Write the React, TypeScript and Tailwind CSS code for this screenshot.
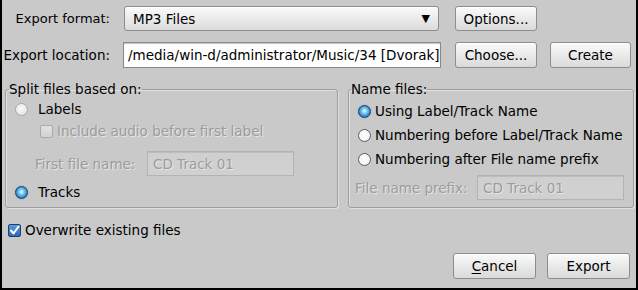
import React from "react";

const btn =
  "flex items-center justify-center rounded-[3px] border border-[#8d8d8d] bg-[linear-gradient(#fbfbfb,#e6e6e6_60%,#dadada)] shadow-[inset_0_1px_0_#ffffff] text-black";

const dim = "text-[#9c9c9c] [text-shadow:1px_1px_0_#e6e6e6]";

function Radio({ checked, light }: { checked?: boolean; light?: boolean }) {
  if (checked) {
    return (
      <span className="block w-[13px] h-[13px] flex-shrink-0 rounded-full border border-[#1d3e6e] bg-[radial-gradient(circle_at_50%_45%,#e6fbff_0%,#7fd0f6_30%,#2f7cc4_70%,#1c4c8c_100%)] shadow-[0_0_2px_#7fa6c8]" />
    );
  }
  return (
    <span
      className={
        light
          ? "block w-[13px] h-[13px] flex-shrink-0 rounded-full border border-[#a8a8a8] bg-[radial-gradient(circle_at_45%_40%,#fafafa,#dedede)]"
          : "block w-[13px] h-[13px] flex-shrink-0 rounded-full border border-[#5e5e5e] bg-[radial-gradient(circle_at_45%_40%,#ffffff,#ececec)]"
      }
    />
  );
}

function Check({ checked }: { checked?: boolean }) {
  if (checked) {
    return (
      <span className="flex items-center justify-center w-[13px] h-[13px] flex-shrink-0 rounded-[2px] border border-[#1d3e6e] bg-[linear-gradient(#5a9be0,#2a69b8)]">
        <svg width="11" height="11" viewBox="0 0 11 11">
          <path d="M2 5.5 L4.5 8.5 L9.5 1.5" fill="none" stroke="#ffffff" strokeWidth="2" strokeLinecap="round" strokeLinejoin="round" />
        </svg>
      </span>
    );
  }
  return (
    <span className="block w-[13px] h-[13px] flex-shrink-0 rounded-[2px] border border-[#a9a9a9] bg-[linear-gradient(#e2e2e2,#d2d2d2)]" />
  );
}

function DisabledInput({ w, value }: { w: string; value: string }) {
  return (
    <div
      className={`${w} h-[25px] flex items-center pl-[5px] border border-[#b3b3b3] bg-[#d0d0d0] shadow-[inset_0_1px_0_#bdbdbd] ${dim}`}
    >
      {value}
    </div>
  );
}

export default function App() {
  return (
    <div className="w-[638px] h-[290px] bg-[#c9c9c9] border-x-2 border-b-2 border-black flex flex-col text-[13.5px] leading-[16px] text-black font-['DejaVu_Sans',sans-serif] overflow-hidden">
      {/* Export format */}
      <div className="mt-[6px] flex items-center">
        <div className="w-[108px] text-right whitespace-nowrap text-[13px]">Export format:</div>
        <div className="ml-[14px] w-[315px] h-[25px] flex items-center justify-between pl-[8px] pr-[8px] rounded-[3px] border border-[#8d8d8d] bg-[linear-gradient(#fbfbfb,#e8e8e8_60%,#dcdcdc)] shadow-[inset_0_1px_0_#ffffff]">
          <span>MP3 Files</span>
          <span className="text-[11px]">▼</span>
        </div>
        <div className={`ml-[16px] w-[82px] h-[25px] ${btn}`}>Options...</div>
      </div>

      {/* Export location */}
      <div className="mt-[11px] flex items-center">
        <div className="w-[108px] text-right whitespace-nowrap">Export location:</div>
        <div className="ml-[13px] w-[318px] h-[26px] flex items-center pl-[4px] border border-[#8a8a8a] bg-white shadow-[inset_0_1px_1px_#c4c4c4] overflow-hidden whitespace-nowrap">
          /media/win-d/administrator/Music/34 [Dvorak]
        </div>
        <div className={`ml-[14px] w-[82px] h-[26px] ${btn}`}>Choose...</div>
        <div className={`ml-[13px] w-[81px] h-[26px] ${btn}`}>Create</div>
      </div>

      {/* Groups */}
      <div className="mt-[13px] flex">
        <fieldset className="ml-[3px] w-[333px] h-[127px] border border-[#9e9e9e] rounded-[3px] shadow-[1px_1px_0_#e0e0e0,inset_1px_1px_0_#e0e0e0]">
          <legend className="ml-[3px] px-0 leading-[16px]">Split files based on:</legend>
          <div className="flex flex-col pt-[1px]">
            <div className="h-[22px] flex items-center pl-[9px]">
              <Radio light />
              <span className="ml-[10px]">Labels</span>
            </div>
            <div className="h-[22px] flex items-center pl-[34px]">
              <Check />
              <span className={`ml-[4px] ${dim}`}>Include audio before first label</span>
            </div>
            <div className="mt-[9px] flex items-center pl-[29px]">
              <span className={`w-[112px] whitespace-nowrap ${dim}`}>First file name:</span>
              <DisabledInput w="w-[147px]" value="CD Track 01" />
            </div>
            <div className="mt-[5px] h-[22px] flex items-center pl-[9px]">
              <Radio checked />
              <span className="ml-[10px]">Tracks</span>
            </div>
          </div>
        </fieldset>

        <fieldset className="ml-[10px] w-[286px] h-[127px] border border-[#9e9e9e] rounded-[3px] shadow-[1px_1px_0_#e0e0e0,inset_1px_1px_0_#e0e0e0]">
          <legend className="ml-[2px] px-0 leading-[16px]">Name files:</legend>
          <div className="flex flex-col pt-[2px]">
            <div className="h-[24px] flex items-center pl-[9px]">
              <Radio checked />
              <span className="ml-[4px]">Using Label/Track Name</span>
            </div>
            <div className="h-[24px] flex items-center pl-[9px]">
              <Radio />
              <span className="ml-[4px] whitespace-nowrap">Numbering before Label/Track Name</span>
            </div>
            <div className="h-[24px] flex items-center pl-[9px]">
              <Radio />
              <span className="ml-[4px] whitespace-nowrap">Numbering after File name prefix</span>
            </div>
            <div className="mt-[4px] flex items-center pl-[6px]">
              <span className={`w-[122px] whitespace-nowrap ${dim}`}>File name prefix:</span>
              <DisabledInput w="w-[147px]" value="CD Track 01" />
            </div>
          </div>
        </fieldset>
      </div>

      {/* Overwrite */}
      <div className="mt-[11px] h-[22px] flex items-center pl-[6px]">
        <Check checked />
        <span className="ml-[4px]">Overwrite existing files</span>
      </div>

      {/* Buttons */}
      <div className="mt-[12px] flex justify-end pr-[6px]">
        <div className={`w-[83px] h-[26px] ${btn}`}>
          <span>
            <span className="underline underline-offset-2">C</span>ancel
          </span>
        </div>
        <div className={`ml-[11px] w-[83px] h-[26px] ${btn} border-[#4f6f93]`}>Export</div>
      </div>
    </div>
  );
}
